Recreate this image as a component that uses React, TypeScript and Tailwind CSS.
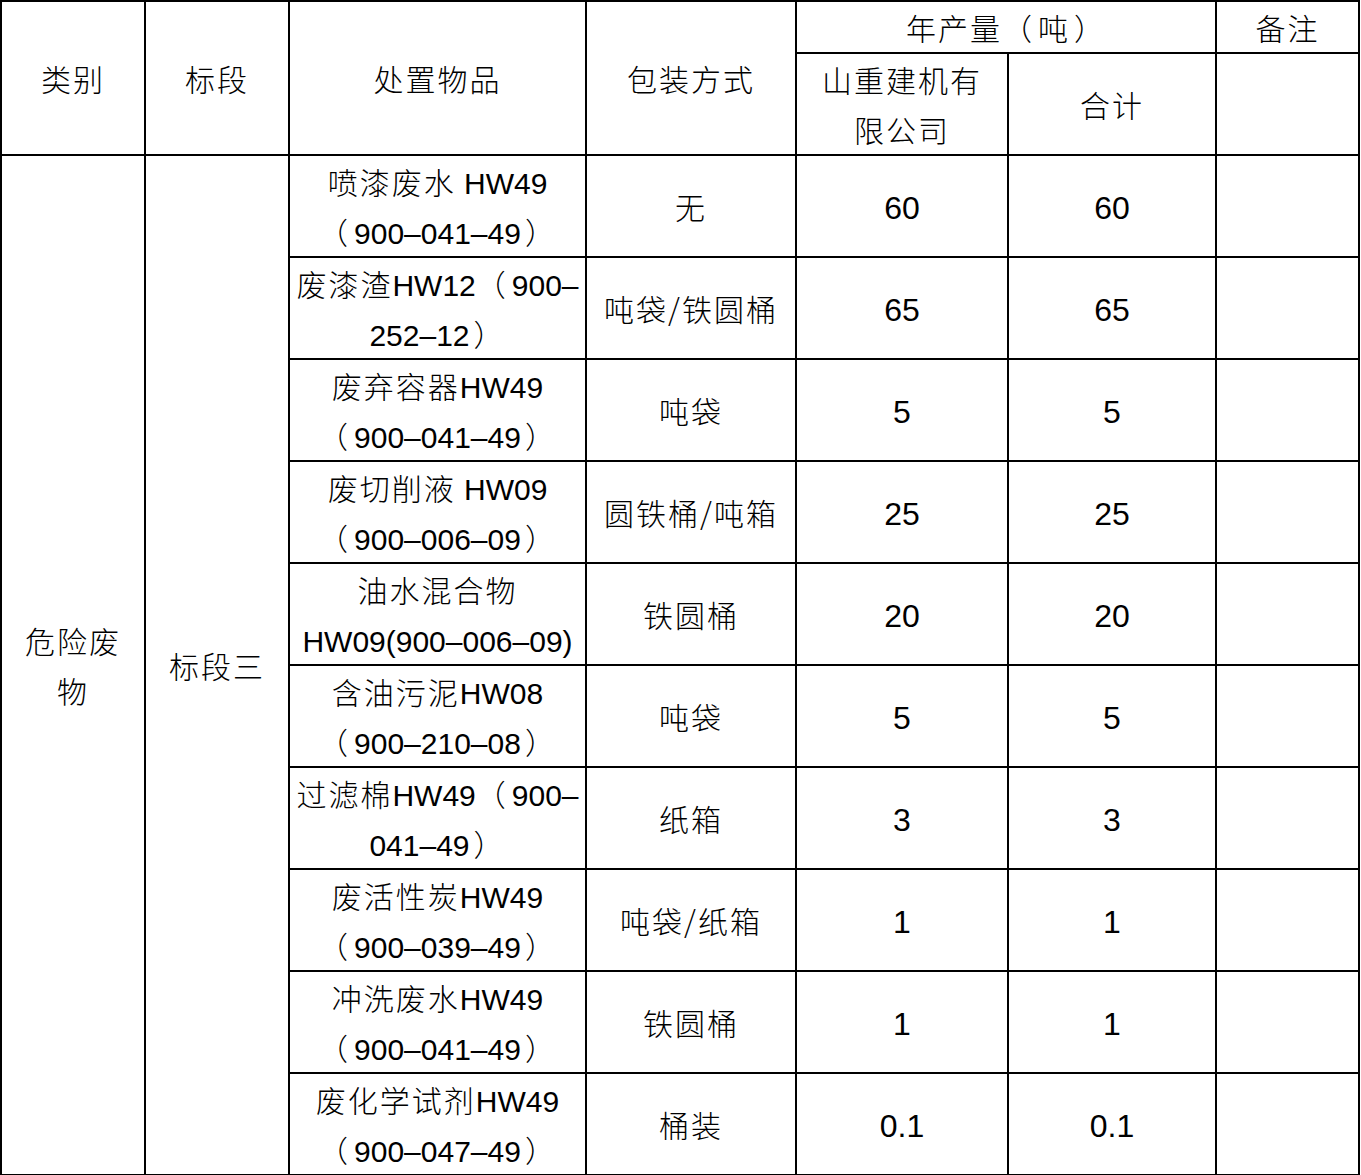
import React from "react";

const rows: { item: [string, string]; pack: string; qty: string }[] = [
  { item: ["喷漆废水 HW49", "（900–041–49）"], pack: "无", qty: "60" },
  { item: ["废漆渣HW12（900–", "252–12）"], pack: "吨袋/铁圆桶", qty: "65" },
  { item: ["废弃容器HW49", "（900–041–49）"], pack: "吨袋", qty: "5" },
  { item: ["废切削液 HW09", "（900–006–09）"], pack: "圆铁桶/吨箱", qty: "25" },
  { item: ["油水混合物", "HW09(900–006–09)"], pack: "铁圆桶", qty: "20" },
  { item: ["含油污泥HW08", "（900–210–08）"], pack: "吨袋", qty: "5" },
  { item: ["过滤棉HW49（900–", "041–49）"], pack: "纸箱", qty: "3" },
  { item: ["废活性炭HW49", "（900–039–49）"], pack: "吨袋/纸箱", qty: "1" },
  { item: ["冲洗废水HW49", "（900–041–49）"], pack: "铁圆桶", qty: "1" },
  { item: ["废化学试剂HW49", "（900–047–49）"], pack: "桶装", qty: "0.1" },
];

const latinFont = { fontFamily: '"Liberation Sans", Arial, sans-serif' };

function Txt({ t, big }: { t: string; big?: boolean }) {
  const parts = t.split(/([A-Za-z0-9().– ]+|[（）])/).filter((p) => p.length > 0);
  return (
    <>
      {parts.map((p, i) => {
        if (/^[A-Za-z0-9().– ]+$/.test(p)) {
          return (
            <span
              key={i}
              className={
                big
                  ? "tracking-normal whitespace-pre leading-none text-[32px]"
                  : "tracking-normal whitespace-pre leading-none text-[30px]"
              }
              style={latinFont}
            >
              {p}
            </span>
          );
        }
        if (p === "（") {
          return (
            <span key={i} className="mr-[4px]">
              {p}
            </span>
          );
        }
        if (p === "）") {
          return (
            <span key={i} className="ml-[4px]">
              {p}
            </span>
          );
        }
        return <span key={i}>{p}</span>;
      })}
    </>
  );
}

const cell = "border-2 border-black text-center align-middle p-0 whitespace-nowrap";

export default function App() {
  return (
    <div className="bg-white w-[1361px] h-[1175px] text-black">
      <table
        className="table-fixed border-collapse w-[1360px] text-[30px] leading-[50px] tracking-[2px] font-light"
        style={{ fontFamily: '"Noto Sans CJK SC", sans-serif' }}
      >
        <colgroup>
          <col className="w-[144px]" />
          <col className="w-[144px]" />
          <col className="w-[297px]" />
          <col className="w-[210px]" />
          <col className="w-[212px]" />
          <col className="w-[208px]" />
          <col className="w-[143px]" />
        </colgroup>
        <tbody>
          <tr className="h-[52px]">
            <td rowSpan={2} className={cell}>类别</td>
            <td rowSpan={2} className={cell}>标段</td>
            <td rowSpan={2} className={cell}>处置物品</td>
            <td rowSpan={2} className={cell}>包装方式</td>
            <td colSpan={2} className={cell}>
              <Txt t="年产量（吨）" />
            </td>
            <td className={cell}>备注</td>
          </tr>
          <tr className="h-[102px]">
            <td className={cell}>
              山重建机有
              <br />
              限公司
            </td>
            <td className={cell}>合计</td>
            <td className={cell}></td>
          </tr>
          {rows.map((r, i) => (
            <tr key={i} className="h-[102px]">
              {i === 0 && (
                <>
                  <td rowSpan={10} className={cell}>
                    危险废
                    <br />
                    物
                  </td>
                  <td rowSpan={10} className={cell}>标段三</td>
                </>
              )}
              <td className={cell}>
                <Txt t={r.item[0]} />
                <br />
                <Txt t={r.item[1]} />
              </td>
              <td className={cell}>{r.pack}</td>
              <td className={cell}>
                <Txt t={r.qty} big />
              </td>
              <td className={cell}>
                <Txt t={r.qty} big />
              </td>
              <td className={cell}></td>
            </tr>
          ))}
        </tbody>
      </table>
    </div>
  );
}
